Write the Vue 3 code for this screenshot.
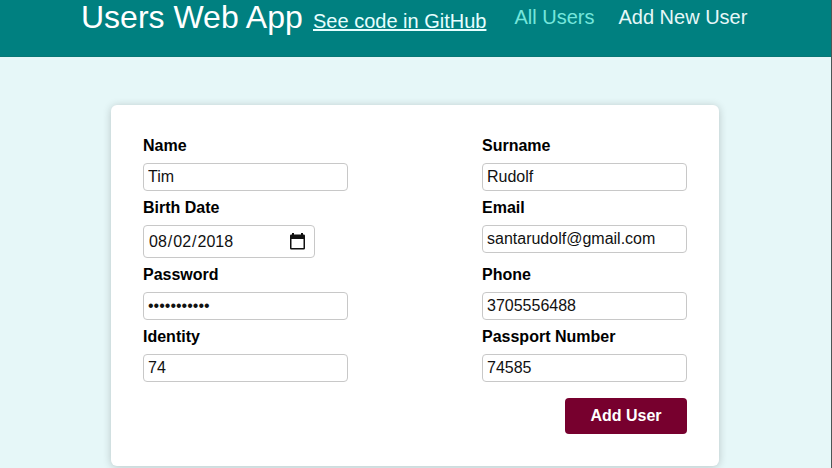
<script setup>
import { ref } from 'vue'

const fields = ref([
  { id: 'name', label: 'Name', type: 'text', value: 'Tim' },
  { id: 'surname', label: 'Surname', type: 'text', value: 'Rudolf' },
  { id: 'birthDate', label: 'Birth Date', type: 'date', value: '2018-08-02' },
  { id: 'email', label: 'Email', type: 'email', value: 'santarudolf@gmail.com' },
  { id: 'password', label: 'Password', type: 'password', value: 'rudolf12345' },
  { id: 'phone', label: 'Phone', type: 'text', value: '3705556488' },
  { id: 'identity', label: 'Identity', type: 'text', value: '74' },
  { id: 'passport', label: 'Passport Number', type: 'text', value: '74585' }
])
</script>

<template>
  <div class="page">
    <header class="header">
      <h1 class="title">Users Web App</h1>
      <a class="code-link" href="#">See code in GitHub</a>
      <nav class="nav">
        <a class="nav-link active" href="#">All Users</a>
        <a class="nav-link" href="#">Add New User</a>
      </nav>
    </header>
    <main class="content">
      <form class="card" @submit.prevent>
        <div class="fields">
          <div v-for="field in fields" :key="field.id" class="field">
            <label :for="field.id">{{ field.label }}</label>
            <div class="control">
              <input :id="field.id" v-model="field.value" :type="field.type" :class="{ date: field.type === 'date' }" />
              <svg v-if="field.type === 'date'" class="calendar" width="15" height="17" viewBox="0 0 15 17" aria-hidden="true">
                <path fill="#111" fill-rule="evenodd" d="M2 0h2v1.5h7V0h2v1.5h.7A1.3 1.3 0 0 1 15 2.8v12.4a1.3 1.3 0 0 1-1.3 1.3H1.3A1.3 1.3 0 0 1 0 15.200V2.800A1.300 1.300 0 0 1 1.300 1.500H2zM1.500 6v9h12V6z" />
              </svg>
            </div>
          </div>
        </div>
        <button class="submit" type="submit">Add User</button>
      </form>
    </main>
  </div>
</template>

<style>
body {
  margin: 0;
  overflow: hidden;
}
</style>

<style scoped>
.page {
  box-sizing: border-box;
  height: 468px;
  overflow: hidden;
  background: #e6f7f8;
  border-right: 1px solid #4b5554;
  font-family: "Liberation Sans", Arial, sans-serif;
  font-size: 16px;
}
.header {
  box-sizing: border-box;
  height: 57px;
  padding-left: 81px;
  display: flex;
  align-items: flex-start;
  background: #008080;
  border-bottom: 1px solid #087876;
  white-space: nowrap;
}
.title {
  margin: 0;
  width: 232px;
  font-size: 32px;
  line-height: 35px;
  font-weight: 400;
  color: #fff;
}
.code-link {
  margin-top: 10px;
  font-size: 20px;
  line-height: 23px;
  color: #e6ffff;
}
.nav {
  display: flex;
  gap: 24px;
  margin: 6px 0 0 28px;
}
.nav-link {
  font-size: 20px;
  line-height: 23px;
  color: #e6f7f8;
  text-decoration: none;
}
.nav-link.active {
  color: #75e6dc;
}
.content {
  padding: 48px 112px 0 111px;
}
.card {
  box-sizing: border-box;
  height: 361px;
  padding: 32px;
  display: flex;
  flex-direction: column;
  background: #fff;
  border-radius: 6px;
  box-shadow: 0 1px 8px rgba(0, 0, 0, 0.2);
}
.fields {
  display: grid;
  grid-template-columns: 205px 205px;
  justify-content: space-between;
  row-gap: 8px;
}
.field {
  display: flex;
  flex-direction: column;
  align-items: flex-start;
  gap: 8px;
}
label {
  font-weight: 700;
  line-height: 18px;
}
.control {
  position: relative;
  display: flex;
}
input {
  box-sizing: border-box;
  width: 205px;
  height: 28px;
  margin: 0;
  padding: 4px;
  border: 1px solid #c8c8c8;
  border-radius: 4px;
  background: #fff;
  color: #111;
  font: inherit;
  outline: none;
}
input.date {
  width: 172px;
  height: 33px;
}
input.date::-webkit-calendar-picker-indicator {
  opacity: 0;
}
.calendar {
  position: absolute;
  top: 8px;
  right: 10px;
  pointer-events: none;
}
.submit {
  align-self: flex-end;
  width: 122px;
  height: 36px;
  margin-top: 16px;
  padding: 0;
  border: 0;
  border-radius: 4px;
  background: #77002e;
  color: #fff;
  font: inherit;
  font-weight: 700;
}
</style>
